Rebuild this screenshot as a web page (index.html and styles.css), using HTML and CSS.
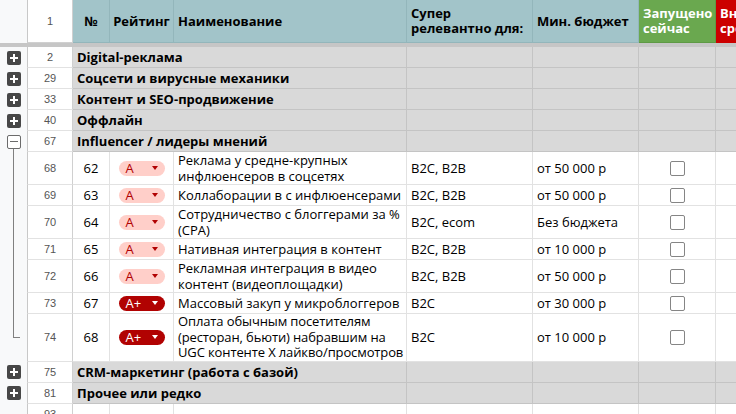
FILE: index.html
```html
<!DOCTYPE html>
<html lang="ru">
<head>
	<meta charset="UTF-8">
	<title>Каналы продвижения</title>
	<link rel="stylesheet" href="styles.css">
</head>
<body>
	<div class="sheet">
		<!-- шапка -->
		<div class="row head">
			<div class="gut"></div>
			<div class="c rn">1</div>
			<div class="c mid">№</div>
			<div class="c mid">Рейтинг</div>
			<div class="c">Наименование</div>
			<div class="c">Супер релевантно для:</div>
			<div class="c">Мин. бюджет</div>
			<div class="c green">Запущено сейчас</div>
			<div class="c red">Внедрить срочно</div>
		</div>
		<div class="freeze"></div>

		<div class="row grp">
			<div class="gut"><span class="tg plus"></span></div>
			<div class="c rn">2</div>
			<div class="c title">Digital-реклама</div>
			<div class="c"></div><div class="c"></div><div class="c"></div><div class="c"></div>
		</div>
		<div class="row grp">
			<div class="gut"><span class="tg plus"></span></div>
			<div class="c rn">29</div>
			<div class="c title">Соцсети и вирусные механики</div>
			<div class="c"></div><div class="c"></div><div class="c"></div><div class="c"></div>
		</div>
		<div class="row grp">
			<div class="gut"><span class="tg plus"></span></div>
			<div class="c rn">33</div>
			<div class="c title">Контент и SEO-продвижение</div>
			<div class="c"></div><div class="c"></div><div class="c"></div><div class="c"></div>
		</div>
		<div class="row grp">
			<div class="gut"><span class="tg plus"></span></div>
			<div class="c rn">40</div>
			<div class="c title">Оффлайн</div>
			<div class="c"></div><div class="c"></div><div class="c"></div><div class="c"></div>
		</div>
		<div class="row grp">
			<div class="gut open"><span class="tg minus"></span></div>
			<div class="c rn">67</div>
			<div class="c title">Influencer / лидеры мнений</div>
			<div class="c"></div><div class="c"></div><div class="c"></div><div class="c"></div>
		</div>

		<div class="row">
			<div class="gut line"></div>
			<div class="c rn">68</div>
			<div class="c mid">62</div>
			<div class="c mid"><span class="chip a">A</span></div>
			<div class="c">Реклама у средне-крупных<br>инфлюенсеров в соцсетях</div>
			<div class="c">B2C, B2B</div>
			<div class="c">от 50 000 р</div>
			<div class="c mid"><span class="box"></span></div>
			<div class="c"></div>
		</div>
		<div class="row">
			<div class="gut line"></div>
			<div class="c rn">69</div>
			<div class="c mid">63</div>
			<div class="c mid"><span class="chip a">A</span></div>
			<div class="c nowrap">Коллаборации в с инфлюенсерами</div>
			<div class="c">B2C, B2B</div>
			<div class="c">от 50 000 р</div>
			<div class="c mid"><span class="box"></span></div>
			<div class="c"></div>
		</div>
		<div class="row">
			<div class="gut line"></div>
			<div class="c rn">70</div>
			<div class="c mid">64</div>
			<div class="c mid"><span class="chip a">A</span></div>
			<div class="c">Сотрудничество с блоггерами за %<br>(CPA)</div>
			<div class="c">B2C, ecom</div>
			<div class="c">Без бюджета</div>
			<div class="c mid"><span class="box"></span></div>
			<div class="c"></div>
		</div>
		<div class="row">
			<div class="gut line"></div>
			<div class="c rn">71</div>
			<div class="c mid">65</div>
			<div class="c mid"><span class="chip a">A</span></div>
			<div class="c">Нативная интеграция в контент</div>
			<div class="c">B2C, B2B</div>
			<div class="c">от 10 000 р</div>
			<div class="c mid"><span class="box"></span></div>
			<div class="c"></div>
		</div>
		<div class="row">
			<div class="gut line"></div>
			<div class="c rn">72</div>
			<div class="c mid">66</div>
			<div class="c mid"><span class="chip a">A</span></div>
			<div class="c">Рекламная интеграция в видео<br>контент (видеоплощадки)</div>
			<div class="c">B2C, B2B</div>
			<div class="c">от 50 000 р</div>
			<div class="c mid"><span class="box"></span></div>
			<div class="c"></div>
		</div>
		<div class="row">
			<div class="gut line"></div>
			<div class="c rn">73</div>
			<div class="c mid">67</div>
			<div class="c mid"><span class="chip ap">A+</span></div>
			<div class="c">Массовый закуп у микроблоггеров</div>
			<div class="c">B2C</div>
			<div class="c">от 30 000 р</div>
			<div class="c mid"><span class="box"></span></div>
			<div class="c"></div>
		</div>
		<div class="row">
			<div class="gut end"></div>
			<div class="c rn">74</div>
			<div class="c mid">68</div>
			<div class="c mid"><span class="chip ap">A+</span></div>
			<div class="c nowrap tight">Оплата обычным посетителям<br>(ресторан, бьюти) набравшим на<br>UGC контенте Х лайкво/просмотров</div>
			<div class="c">B2C</div>
			<div class="c">от 10 000 р</div>
			<div class="c mid"><span class="box"></span></div>
			<div class="c"></div>
		</div>

		<div class="row grp">
			<div class="gut"><span class="tg plus"></span></div>
			<div class="c rn">75</div>
			<div class="c title">CRM-маркетинг (работа с базой)</div>
			<div class="c"></div><div class="c"></div><div class="c"></div><div class="c"></div>
		</div>
		<div class="row grp">
			<div class="gut"><span class="tg plus"></span></div>
			<div class="c rn">81</div>
			<div class="c title">Прочее или редко</div>
			<div class="c"></div><div class="c"></div><div class="c"></div><div class="c"></div>
		</div>
		<div class="row">
			<div class="gut"></div>
			<div class="c rn">93</div>
			<div class="c"></div><div class="c"></div><div class="c"></div><div class="c"></div>
			<div class="c"></div><div class="c"></div><div class="c"></div>
		</div>
	</div>
</body>
</html>
```

FILE: styles.css
```css
*{
	margin:0;
	padding:0;
}
body{
	overflow: hidden;
	background: #fff;
	color: #000;
	font-family: "Open Sans", "DejaVu Sans", sans-serif;
	font-size: 13px;
}
.sheet{
	width: 796px;
}
.row{
	display: grid;
	grid-template-columns: 27px 46px 37px 64px 233px 126px 106px 77px 80px;
	min-height: 21px;
}

/* ячейки */
.c{
	box-sizing: border-box;
	display: flex;
	align-items: center;
	min-width: 0;
	padding: 0 4px;
	line-height: 16px;
	overflow: hidden;
	border-right: 1px solid #e2e2e2;
	border-bottom: 1px solid #e2e2e2;
}
.mid{
	justify-content: center;
	text-align: center;
}
.nowrap{
	white-space: nowrap;
}
.tight{
	line-height: 15.5px;
	letter-spacing: -0.12px;
}
.rn{
	justify-content: center;
	border-left: 1px solid #c8c8c8;
	border-right-color: #d0d0d0;
	color: #555;
	font-family: "Liberation Sans", Arial, sans-serif;
	font-size: 11px;
}

/* шапка */
.head{
	min-height: 43px;
}
.head .c{
	background: #a2c4c9;
	border-color: #93b6bb;
	font-weight: 700;
	line-height: 15px;
}
.head .rn{
	background: #fff;
	border-color: #d0d0d0;
	border-left-color: #c8c8c8;
	font-weight: 400;
}
.head .green{
	background: #6aa84f;
	border-color: #5e9a45;
	color: #fff;
}
.head .red{
	background: #cc0000;
	border-color: #cc0000;
	color: #fff;
}
.freeze{
	height: 4px;
	background: #c6c6c6;
}

/* строки-группы */
.grp .c{
	background: #d9d9d9;
	border-color: #c4c4c4;
}
.grp .rn{
	background: #fff;
	border-color: #e2e2e2;
	border-left-color: #c8c8c8;
	border-right-color: #d0d0d0;
}
.grp .title{
	grid-column: span 3;
	font-weight: 700;
}

/* левое поле с группировкой */
.gut{
	display: flex;
	align-items: center;
	justify-content: center;
	background: #f8f9fa;
}
.gut.open{
	background: linear-gradient(#808080,#808080) 13px 100%/1px 50% no-repeat, #f8f9fa;
}
.gut.line{
	background: linear-gradient(#808080,#808080) 13px 0/1px 100% no-repeat, #f8f9fa;
}
.gut.end{
	background:
		linear-gradient(#808080,#808080) 13px 0/1px 24px no-repeat,
		linear-gradient(#808080,#808080) 13px 23px/7px 1px no-repeat,
		#f8f9fa;
}
.tg{
	box-sizing: border-box;
	width: 14px;
	height: 14px;
	border-radius: 2px;
}
.tg.plus{
	background:
		linear-gradient(#fff,#fff) center/8px 2px no-repeat,
		linear-gradient(#fff,#fff) center/2px 8px no-repeat,
		#474747;
}
.tg.minus{
	border: 1px solid #6b6b6b;
	background: linear-gradient(#6b6b6b,#6b6b6b) center/8px 1px no-repeat, #fff;
}

/* рейтинг */
.chip{
	box-sizing: border-box;
	display: flex;
	align-items: center;
	justify-content: space-between;
	width: 46px;
	height: 15px;
	padding: 0 7px;
	border-radius: 8px;
	line-height: 15px;
}
.chip::after{
	content: "";
	border-left: 3.5px solid transparent;
	border-right: 3.5px solid transparent;
	border-top: 4px solid currentColor;
}
.chip.a{
	background: #ffcfc9;
	color: #b10202;
}
.chip.ap{
	background: #b10202;
	color: #fff;
}

/* чекбокс */
.box{
	box-sizing: border-box;
	width: 15px;
	height: 15px;
	border: 1.5px solid #858585;
	border-radius: 2px;
}
```
